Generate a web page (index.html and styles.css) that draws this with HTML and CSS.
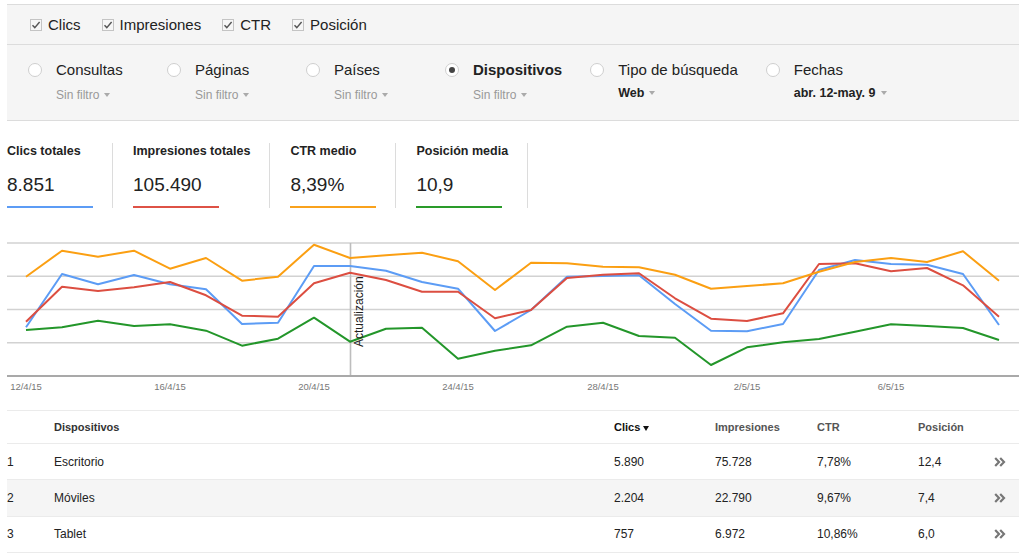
FILE: index.html
```html
<!DOCTYPE html>
<html lang="es">
<head>
<meta charset="utf-8">
<title>Search Analytics</title>
<link rel="stylesheet" href="styles.css">
</head>
<body>
<div class="page">
  <div class="panel">
    <div class="toggles">
      <label class="check"><svg class="cb" viewBox="0 0 12 12"><rect class="cb-box" x="0.5" y="0.5" width="11" height="11"/><polyline class="cb-mark" points="2.5,6.2 4.8,8.6 9.6,3"/></svg><span>Clics</span></label>
      <label class="check"><svg class="cb" viewBox="0 0 12 12"><rect class="cb-box" x="0.5" y="0.5" width="11" height="11"/><polyline class="cb-mark" points="2.5,6.2 4.8,8.6 9.6,3"/></svg><span>Impresiones</span></label>
      <label class="check"><svg class="cb" viewBox="0 0 12 12"><rect class="cb-box" x="0.5" y="0.5" width="11" height="11"/><polyline class="cb-mark" points="2.5,6.2 4.8,8.6 9.6,3"/></svg><span>CTR</span></label>
      <label class="check"><svg class="cb" viewBox="0 0 12 12"><rect class="cb-box" x="0.5" y="0.5" width="11" height="11"/><polyline class="cb-mark" points="2.5,6.2 4.8,8.6 9.6,3"/></svg><span>Posición</span></label>
    </div>
    <div class="filters">
      <div class="filter">
        <span class="radio"></span>
        <div class="filter-text">
          <div class="filter-name">Consultas</div>
          <div class="filter-value">Sin filtro<span class="caret"></span></div>
        </div>
      </div>
      <div class="filter">
        <span class="radio"></span>
        <div class="filter-text">
          <div class="filter-name">Páginas</div>
          <div class="filter-value">Sin filtro<span class="caret"></span></div>
        </div>
      </div>
      <div class="filter">
        <span class="radio"></span>
        <div class="filter-text">
          <div class="filter-name">Países</div>
          <div class="filter-value">Sin filtro<span class="caret"></span></div>
        </div>
      </div>
      <div class="filter">
        <span class="radio selected"></span>
        <div class="filter-text">
          <div class="filter-name active">Dispositivos</div>
          <div class="filter-value">Sin filtro<span class="caret"></span></div>
        </div>
      </div>
      <div class="filter">
        <span class="radio"></span>
        <div class="filter-text">
          <div class="filter-name">Tipo de búsqueda</div>
          <div class="filter-value set">Web<span class="caret"></span></div>
        </div>
      </div>
      <div class="filter">
        <span class="radio"></span>
        <div class="filter-text">
          <div class="filter-name">Fechas</div>
          <div class="filter-value set">abr. 12-may. 9<span class="caret"></span></div>
        </div>
      </div>
    </div>
  </div>

  <div class="totals">
    <div class="total">
      <div class="total-label">Clics totales</div>
      <div class="total-value">8.851</div>
      <div class="total-bar blue"></div>
    </div>
    <div class="total">
      <div class="total-label">Impresiones totales</div>
      <div class="total-value">105.490</div>
      <div class="total-bar red"></div>
    </div>
    <div class="total">
      <div class="total-label">CTR medio</div>
      <div class="total-value">8,39%</div>
      <div class="total-bar orange"></div>
    </div>
    <div class="total">
      <div class="total-label">Posición media</div>
      <div class="total-value">10,9</div>
      <div class="total-bar green"></div>
    </div>
  </div>

  <svg class="chart" viewBox="7 236 1012 160" width="1012" height="160">
    <line class="grid" x1="7" y1="243" x2="1019" y2="243"/>
    <line class="grid" x1="7" y1="276.3" x2="1019" y2="276.3"/>
    <line class="grid" x1="7" y1="309.5" x2="1019" y2="309.5"/>
    <line class="grid" x1="7" y1="342.8" x2="1019" y2="342.8"/>
    <line class="update" x1="350.5" y1="243" x2="350.5" y2="376"/>
    <line class="baseline" x1="7" y1="376" x2="1019" y2="376"/>
    <polyline class="series s-blue" points="26,327.3 62,274 98,284.3 134,275 170,284.3 206,289.3 242,324 278,322.7 314,266 350,266 386,270.7 422,282 458,288.7 495,331 531,310 567,276.7 603,276 639,275.3 675,304 711,330.7 747,331.3 783,324 819,270 855,260 891,264 927,264.7 963,274 999,325"/>
    <polyline class="series s-red" points="26,321.7 62,286.7 98,291 134,287.3 170,282 206,295.3 242,315.7 278,316.7 314,283.3 350,272.7 386,280 422,291.7 458,291.7 495,318.3 531,310 567,278 603,274.7 639,273.3 675,298.3 711,318.7 747,321 783,313.3 819,264 855,263.3 891,271.3 927,268 963,285.3 999,316.7"/>
    <polyline class="series s-orange" points="26,276.7 62,250.7 98,256.7 134,250.7 170,268.7 206,258 242,280.7 278,276.7 314,244.7 350,258 386,255.3 422,252.7 458,261.3 495,290 531,262.7 567,263.3 603,266.7 639,267.3 675,274.7 711,288.7 747,286 783,283.3 819,271.7 855,262 891,258 927,262 963,251.3 999,280.7"/>
    <polyline class="series s-green" points="26,330 62,327.3 98,320.7 134,326 170,324.3 206,330.7 242,345.7 278,338.7 314,317.7 350,341.7 386,328.7 422,327.7 458,358.7 495,350.7 531,345.3 567,326.7 603,322.7 639,336 675,337.7 711,365 747,347.3 783,342.3 819,339 855,331.7 891,324.3 927,326 963,328 999,340"/>
    <text class="annot" transform="translate(362.5 347) rotate(-90)">Actualización</text>
    <text class="tick" x="26" y="390">12/4/15</text>
    <text class="tick" x="170" y="390">16/4/15</text>
    <text class="tick" x="314" y="390">20/4/15</text>
    <text class="tick" x="458" y="390">24/4/15</text>
    <text class="tick" x="603" y="390">28/4/15</text>
    <text class="tick" x="747" y="390">2/5/15</text>
    <text class="tick" x="891" y="390">6/5/15</text>
  </svg>

  <div class="table">
    <div class="row head">
      <div></div>
      <div>Dispositivos</div>
      <div class="sorted">Clics<span class="sort-caret"></span></div>
      <div>Impresiones</div>
      <div>CTR</div>
      <div>Posición</div>
      <div></div>
    </div>
    <div class="row">
      <div>1</div>
      <div>Escritorio</div>
      <div>5.890</div>
      <div>75.728</div>
      <div>7,78%</div>
      <div>12,4</div>
      <div><svg class="more" viewBox="0 0 12 10"><polyline points="1.2,1 5,5 1.2,9"/><polyline points="6.2,1 10,5 6.2,9"/></svg></div>
    </div>
    <div class="row alt">
      <div>2</div>
      <div>Móviles</div>
      <div>2.204</div>
      <div>22.790</div>
      <div>9,67%</div>
      <div>7,4</div>
      <div><svg class="more" viewBox="0 0 12 10"><polyline points="1.2,1 5,5 1.2,9"/><polyline points="6.2,1 10,5 6.2,9"/></svg></div>
    </div>
    <div class="row">
      <div>3</div>
      <div>Tablet</div>
      <div>757</div>
      <div>6.972</div>
      <div>10,86%</div>
      <div>6,0</div>
      <div><svg class="more" viewBox="0 0 12 10"><polyline points="1.2,1 5,5 1.2,9"/><polyline points="6.2,1 10,5 6.2,9"/></svg></div>
    </div>
  </div>
</div>
</body>
</html>
```

FILE: styles.css
```css
* { box-sizing: border-box; }

html, body {
  margin: 0;
  padding: 0;
  background: #fff;
}

body {
  font-family: "Liberation Sans", Arial, sans-serif;
  color: #222;
}

.page {
  width: 1012px;
  margin-left: 7px;
  padding-top: 4px;
}

/* ---------- grey control panel ---------- */
.panel {
  background: #f5f5f5;
  border-top: 1px solid #dcdcdc;
  border-bottom: 1px solid #dcdcdc;
}

.toggles {
  height: 40px;
  display: flex;
  align-items: center;
  padding-left: 23px;
  border-bottom: 1px solid #dcdcdc;
}

.check {
  display: flex;
  align-items: center;
  gap: 6px;
  margin-right: 21px;
  font-size: 15px;
  line-height: 18px;
  color: #222;
}

.cb {
  width: 12px;
  height: 12px;
  display: block;
}

.cb-box {
  fill: #f6f6f6;
  stroke: #c4c4c4;
  stroke-width: 1;
}

.cb-mark {
  fill: none;
  stroke: #555;
  stroke-width: 1.4;
}

.filters {
  display: flex;
  height: 75px;
  padding: 16px 0 0 21px;
}

.filter {
  display: flex;
  gap: 14px;
  min-width: 111px;
  margin-right: 28px;
}

.radio {
  width: 14px;
  height: 14px;
  margin-top: 2px;
  border-radius: 50%;
  background: #fff;
  border: 1px solid #cfcfcf;
  flex: none;
  display: flex;
  align-items: center;
  justify-content: center;
}

.radio.selected::after {
  content: "";
  width: 6px;
  height: 6px;
  border-radius: 50%;
  background: #444;
}

.filter-name {
  font-size: 15px;
  line-height: 18px;
  color: #222;
  white-space: nowrap;
}

.filter-name.active {
  font-weight: bold;
}

.filter-value {
  margin-top: 9px;
  font-size: 12px;
  line-height: 14px;
  color: #999;
  white-space: nowrap;
  display: flex;
  align-items: center;
}

.filter-value.set {
  margin-top: 7px;
  font-size: 12.5px;
  font-weight: bold;
  color: #222;
}

.caret {
  display: inline-block;
  margin-left: 5px;
  width: 0;
  height: 0;
  border-left: 3.5px solid transparent;
  border-right: 3.5px solid transparent;
  border-top: 4px solid #aaa;
}

/* ---------- totals ---------- */
.totals {
  display: flex;
  margin-top: 22px;
}

.total {
  min-width: 125px;
  padding: 0 19px 0 20px;
  border-right: 1px solid #dcdcdc;
  height: 65px;
}

.total:first-child {
  padding-left: 0;
  min-width: 105px;
}

.total-label {
  font-size: 12.5px;
  line-height: 16px;
  font-weight: bold;
  color: #222;
  white-space: nowrap;
}

.total-value {
  margin-top: 14px;
  font-size: 19px;
  line-height: 24px;
  color: #222;
}

.total-bar {
  margin-top: 9px;
  width: 86px;
  height: 2px;
}

.blue { background: #5c9cf5; }
.red { background: #de5246; }
.orange { background: #f9a21c; }
.green { background: #2a9b2a; }

/* ---------- chart ---------- */
.chart {
  display: block;
  margin-top: 28px;
}

.grid {
  stroke: #d2d2d2;
  stroke-width: 1.6;
}

.baseline {
  stroke: #a9a9a9;
  stroke-width: 2;
}

.update {
  stroke: #bdbdbd;
  stroke-width: 1.6;
}

.series {
  fill: none;
  stroke-width: 2;
  stroke-linejoin: round;
}

.s-blue { stroke: #5c9cf5; }
.s-red { stroke: #dc4e41; }
.s-orange { stroke: #fb9f12; }
.s-green { stroke: #23962a; }

.annot {
  font-family: "Liberation Sans", Arial, sans-serif;
  font-size: 12px;
  fill: #222;
}

.tick {
  font-family: "Liberation Sans", Arial, sans-serif;
  font-size: 9.5px;
  fill: #777;
  text-anchor: middle;
}

/* ---------- table ---------- */
.table {
  margin-top: 14px;
  border-top: 1px solid #ebebeb;
}

.row {
  display: grid;
  grid-template-columns: 47px 560px 101px 102px 101px 76px 1fr;
  align-items: center;
  height: 36.4px;
  border-bottom: 1px solid #ebebeb;
  font-size: 12px;
  color: #222;
}

.row.head {
  height: 33px;
  font-size: 11px;
  font-weight: bold;
  color: #555;
}

.row.head > div:nth-child(2) {
  color: #333;
}

.row.alt {
  background: #f5f5f5;
}

.sorted {
  color: #111;
  display: flex;
  align-items: center;
}

.sort-caret {
  display: inline-block;
  margin-left: 3px;
  margin-top: 2px;
  width: 0;
  height: 0;
  border-left: 3px solid transparent;
  border-right: 3px solid transparent;
  border-top: 5px solid #111;
}

.more {
  display: block;
  width: 12px;
  height: 10px;
}

.more polyline {
  fill: none;
  stroke: #777;
  stroke-width: 2.2;
}
```
